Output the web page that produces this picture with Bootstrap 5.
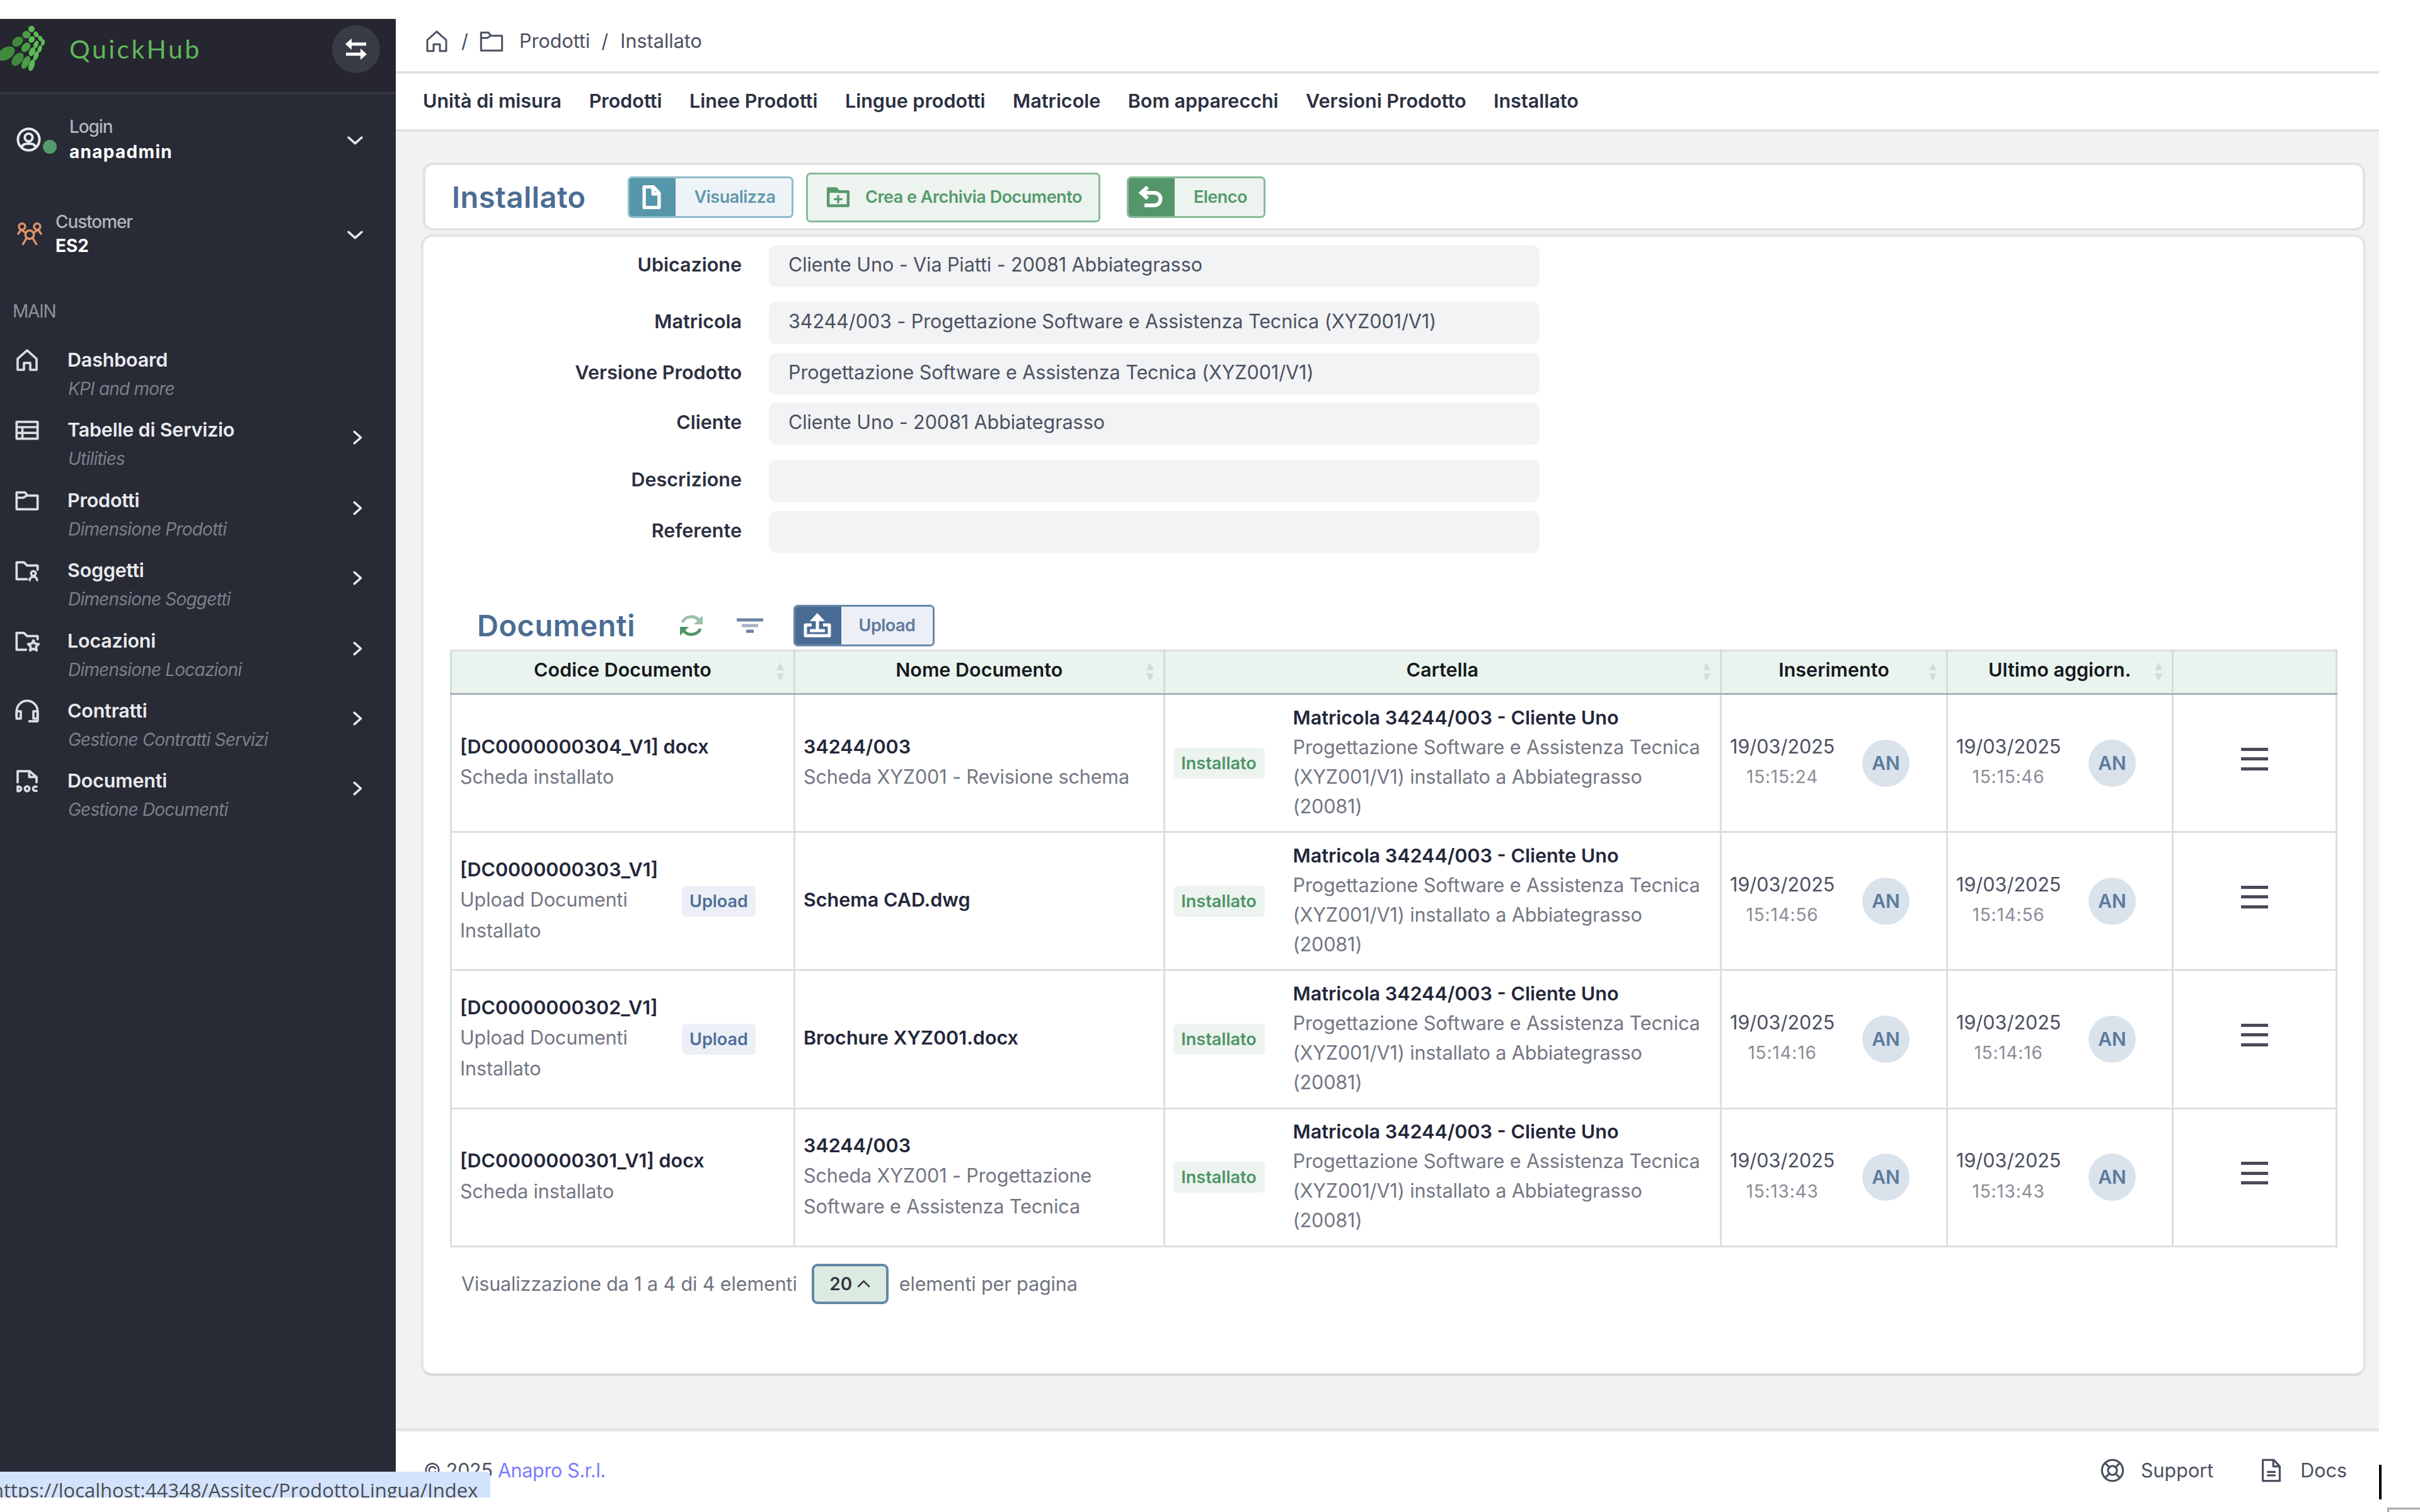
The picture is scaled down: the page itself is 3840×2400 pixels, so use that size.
<!DOCTYPE html>
<html lang="it">
<head>
  <meta charset="UTF-8" />
  <meta name="viewport" content="width=device-width, initial-scale=1.0"/>
  <title>QuickHub - Installato</title>
  <link href="https://cdn.jsdelivr.net/npm/bootstrap@5.3.2/dist/css/bootstrap.min.css" rel="stylesheet"/>
  <style>
    body {
      font-family: Inter, "Liberation Sans", sans-serif;
      font-size: 30.5px;
      line-height: 48.5px;
      color: #4b5160;
      background: #fff;
      height: 2400px;
      overflow: hidden;
    }
    svg { display: block; flex: none; fill: none; stroke: currentColor; stroke-width: 2; stroke-linecap: round; stroke-linejoin: round; }
    a { text-decoration: none; color: inherit; }

    /* sidebar */
    .sidebar { width: 628px; height: 2307px; margin-top: 30px; background: #282a35; color: #e9eaee; }
    .side-head { height: 120px; background: #252630; border-bottom: 4px solid #343641; padding: 0 25px 20px 0; }
    .brand-name { font-family: Lato, sans-serif; font-size: 41px; letter-spacing: 3.4px; color: #5fb85a; margin-left: 36px; }
    .toggle-btn { width: 76px; height: 76px; background: #393b46; color: #fff; }
    .user-box { height: 142px; padding: 0 52px 0 26px; font-size: 28px; line-height: 40px; }
    .cust-box { height: 158px; line-height: 38px; }
    .cust-name { margin-left: 20px; }
    .head-chev { margin-top: 5px; stroke-width: 3.4; }
    .muted-top { color: #b2b4bc; font-weight: 500; letter-spacing: -1.1px; }
    .online-dot { width: 22px; height: 22px; background: #559a6b; margin: 24px 20px 0 3px; }
    .user-name { letter-spacing: 1.3px; }
    .section-label { height: 89px; line-height: 89px; padding-left: 20px; font-size: 28px; color: #90929b; letter-spacing: -1.2px; }
    .side-item { height: 111.4px; padding: 8px 52px 0 23px; }
    .side-icon { margin: 5px 44px 0 0; color: #dcdde2; stroke-width: 2.2; }
    .side-chev { margin-top: 25px; stroke-width: 3; }
    .side-title { line-height: 47px; font-weight: 600; letter-spacing: -0.2px; color: #e9eaee; }
    .side-sub { line-height: 47px; font-size: 28px; font-style: italic; letter-spacing: -0.8px; color: #7d7f89; padding-left: 1px; }

    /* header */
    .main-col { width: 3147px; height: 2400px; }
    .crumbs { height: 117px; padding: 18px 0 0 45px; border-bottom: 4px solid #dfe1e6; }
    .top-nav { height: 92px; padding: 0 0 2px 43px; gap: 43.5px; border-bottom: 4px solid #e2e2e2; font-weight: 600; letter-spacing: 0; color: #2b3041; }
    .page-area { height: 2058px; background: #f2f2f2; padding: 49px 0 0 43px; }

    /* cards */
    .title-card { width: 3082px; height: 108px; border: 4px solid #dfe2e6; border-radius: 16px; background: #fff; padding: 2px 0 0 42px; }
    .main-card { width: 3086px; height: 1812px; margin: 6px 0 0 -3px; border: 4px solid #e4e4e5; border-bottom-color: #d9d9d9; border-radius: 18px; background: #fff; }
    .page-title { font-size: 47px; font-weight: 600; letter-spacing: 0.5px; color: #4b6d94; }

    .act-btn { height: 66px; border: 3px solid; border-radius: 7px; font-size: 27px; font-weight: 600; letter-spacing: -0.5px; overflow: hidden; }
    .act-btn .act-icon { width: 76px; height: 66px; margin-left: -3px; color: #fff; }
    .act-teal { border-color: #8ebccb; background: #edf3f6; color: #6197ac; }
    .act-teal .act-icon { background: #5596aa; }
    .act-green { border-color: #88bb99; background: #edf3ef; color: #569a6c; }
    .act-green .act-icon { background: #549669; }
    .act-blue { border-color: #6888ad; background: #eceff5; color: #5e7a9c; }
    .act-blue .act-icon { background: #496b94; }

    /* form */
    .field-label { width: 505px; font-weight: 600; color: #2b3040; margin-right: 43px; line-height: 46px; padding-bottom: 5px; }
    .field-box { width: 1223px; height: 67px; border-radius: 12px; background: #f2f3f5; padding: 7px 31px; letter-spacing: -0.07px; }

    /* table */
    .docs-table { width: 2994.5px; margin: 5px 0 0 42px; border-collapse: collapse; table-layout: fixed; }
    .docs-table th, .docs-table td { border: 3px solid #dcdee3; padding: 0 13px; vertical-align: middle; }
    .docs-table th { position: relative; height: 69px; background: #eaf4ee; color: #17191f; font-weight: 600; text-align: center; border-bottom-color: #a9b2ba; border-left-color: #d3dcd9; border-right-color: #d3dcd9; padding-bottom: 8px; }
    .docs-table td { height: 219.2px; }
    .sort-mark { position: absolute; right: 14px; top: 17px; color: #d8d9dc; fill: currentColor; stroke: none; }
    .strong-text { font-weight: 600; color: #23273a; }
    .soft-text { color: #737783; letter-spacing: -0.1px; }
    .cell-text { padding-bottom: 4px; }
    .folder-text { line-height: 47px; padding-bottom: 5px; margin-left: 45px; }
    .date-text { width: 166px; text-align: center; padding-bottom: 4px; }
    .time-text { font-size: 28px; letter-spacing: 0.8px; color: #8a8c96; }
    .tag { height: 49px; line-height: 49px; border-radius: 7px; font-size: 27px; font-weight: 600; text-align: center; }
    .tag-green { width: 145px; background: #edf3ef; color: #4f9567; }
    .tag-blue { width: 117px; background: #eceff5; color: #4f6f98; }
    .initials { width: 75px; height: 75px; margin-left: 44px; background: #dae2ec; color: #5b7a9c; font-size: 30px; font-weight: 600; }
    .burger { width: 43px; height: 36px; margin: 0 auto 13px; border-top: 5px solid #474b58; border-bottom: 5px solid #474b58; padding-top: 10.5px; }
    .burger div { height: 5px; background: #474b58; }

    .pager { margin: 26px 0 0 60px; color: #6f7480; letter-spacing: -0.12px; }
    .page-size { width: 122px; height: 64px; border: 4px solid #6488a8; border-radius: 9px; background: #dcebe1; color: #33373f; font-size: 28px; font-weight: 600; margin: 0 17px 0 23px; }

    /* footer */
    .foot { height: 133px; border-top: 5px solid #e3e6e9; padding: 0 51px 4px 44px; }
    .foot a.site { color: #7a7cff; letter-spacing: -0.35px; }
    .copy { letter-spacing: -0.3px; }
    .status-bar { position: absolute; left: 0; top: 2336px; width: 778px; height: 41px; background: #d3e3fd; overflow: hidden; border-top-right-radius: 8px; color: #4a4d52; }
    .status-bar div { margin: 8px 0 0 -13px; font-family: "Open Sans", sans-serif; font-size: 31px; line-height: 42px; white-space: nowrap; }
    .caret-line { position: absolute; left: 3775px; top: 2325px; width: 4px; height: 55px; background: #000; }
    .corner-box { position: absolute; left: 3788px; top: 2393px; width: 60px; height: 20px; border: 3px solid #a8a8a8; }
  </style>
</head>
<body>
  <!-- shared icons -->
  <svg width="0" height="0" class="position-absolute">
    <symbol id="i-home" viewBox="0 0 24 24"><path d="M3 21V10.500L12 2.500l9 8V21h-6v-6.500h-6V21z"/></symbol>
    <symbol id="i-folder" viewBox="0 0 24 24"><path d="M2 4h8l2.500 3H22v13H2zM2 9h6.500l3-2"/></symbol>
    <symbol id="i-right" viewBox="0 0 14 20"><path d="M2 2l9 8-9 8"/></symbol>
    <symbol id="i-down" viewBox="0 0 24 14"><path d="M2 2l10 9L22 2"/></symbol>
    <symbol id="i-sort" viewBox="0 0 14 31"><path d="M7 0l6 13H1zM7 31L1 18h12z"/></symbol>
  </svg>

  <div class="d-flex">
    <aside class="sidebar">
      <div class="side-head d-flex align-items-center">
        <svg width="74" height="78" viewBox="0 40 74 78" style="stroke:none">
          <g fill="#3f8a3c"><ellipse cx="10" cy="86" rx="15" ry="9.500" transform="rotate(-35 10 86)"/><ellipse cx="28" cy="67" rx="9.500" ry="7" transform="rotate(-35 28 67)"/><ellipse cx="28" cy="95" rx="12" ry="7.500" transform="rotate(-50 28 95)"/></g>
          <g fill="#4a9f46"><ellipse cx="42" cy="56" rx="6.500" ry="6"/><ellipse cx="41" cy="76" rx="8.500" ry="6" transform="rotate(-50 41 76)"/><ellipse cx="41" cy="100" rx="11" ry="5.500" transform="rotate(-62 41 100)"/></g>
          <g fill="#5bbb55"><ellipse cx="50" cy="47" rx="5" ry="5"/><ellipse cx="50.500" cy="64" rx="5.500" ry="4.500" transform="rotate(-50 50 64)"/><ellipse cx="51" cy="83" rx="7.500" ry="4.500" transform="rotate(-65 51 83)"/><ellipse cx="50.500" cy="105" rx="9.500" ry="4.500" transform="rotate(-72 50 105)"/><ellipse cx="57.500" cy="55" rx="4.800" ry="3.700" transform="rotate(60 57 55)"/><ellipse cx="57.500" cy="72" rx="6.200" ry="3.700" transform="rotate(-70 57 72)"/><ellipse cx="57.500" cy="90" rx="7.700" ry="3.700" transform="rotate(-72 57 90)"/><ellipse cx="64" cy="62" rx="4.700" ry="3.300" transform="rotate(60 64 62)"/><ellipse cx="63.500" cy="79" rx="6.200" ry="3.300" transform="rotate(-72 63 79)"/><ellipse cx="68.500" cy="69" rx="5" ry="2.900" transform="rotate(-80 68 69)"/></g>
        </svg>
        <span class="brand-name">QuickHub</span>
        <div class="toggle-btn rounded-circle ms-auto d-flex align-items-center justify-content-center">
          <svg width="34" height="36" viewBox="0 0 34 36"><g stroke="none" fill="currentColor"><path d="M0 10L10 1v18z"/><path d="M34 26L24 17v18z"/></g><path stroke-width="5" stroke-linecap="butt" d="M8 10h25M1 26h25"/></svg>
        </div>
      </div>

      <div class="user-box d-flex align-items-center">
        <svg width="39" height="39" viewBox="0 0 24 24" style="stroke-width:2.4"><circle cx="12" cy="12" r="10.500"/><circle cx="12" cy="10" r="3.800"/><path d="M5.500 19c1-4 12-4 13 0"/></svg>
        <div class="online-dot rounded-circle"></div>
        <div><div class="muted-top">Login</div><div class="user-name fw-bold text-white">anapadmin</div></div>
        <svg class="ms-auto head-chev" width="25" height="15"><use href="#i-down"/></svg>
      </div>
      <div class="user-box cust-box d-flex align-items-center">
        <svg width="42" height="36" viewBox="0 0 28 24" color="#dd9468" style="stroke-width:2.3"><circle cx="14" cy="13" r="4.500"/><path d="M7 23l3.500-6M21 23l-3.500-6M2 12l3-4.500L9.500 11M26 12l-3-4.500-4.500 3.500"/><circle cx="6" cy="4.500" r="3.300"/><circle cx="22" cy="4.500" r="3.300"/></svg>
        <div class="cust-name"><div class="muted-top">Customer</div><div class="fw-bold text-white">ES2</div></div>
        <svg class="ms-auto head-chev" width="25" height="15"><use href="#i-down"/></svg>
      </div>
      <div class="section-label">MAIN</div>

      <div class="side-item d-flex">
        <svg class="side-icon" width="40" height="40"><use href="#i-home"/></svg>
        <div><div class="side-title">Dashboard</div><div class="side-sub">KPI and more</div></div>
      </div>
      <div class="side-item d-flex">
        <svg class="side-icon" width="40" height="40" viewBox="0 0 24 24"><path d="M2 4h20v16H2zM2 9h20M2 14.500h20M7.500 9v11"/></svg>
        <div><div class="side-title">Tabelle di Servizio</div><div class="side-sub">Utilities</div></div>
        <svg class="ms-auto side-chev" width="16" height="23"><use href="#i-right"/></svg>
      </div>
      <div class="side-item d-flex">
        <svg class="side-icon" width="40" height="40"><use href="#i-folder"/></svg>
        <div><div class="side-title">Prodotti</div><div class="side-sub">Dimensione Prodotti</div></div>
        <svg class="ms-auto side-chev" width="16" height="23"><use href="#i-right"/></svg>
      </div>
      <div class="side-item d-flex">
        <svg class="side-icon" width="40" height="40" viewBox="0 0 24 24"><path d="M12 20H2V4h7l3 3h10v4"/><circle cx="18" cy="14.500" r="2.200"/><path d="M14.500 21c0-4.500 7-4.500 7 0"/></svg>
        <div><div class="side-title">Soggetti</div><div class="side-sub">Dimensione Soggetti</div></div>
        <svg class="ms-auto side-chev" width="16" height="23"><use href="#i-right"/></svg>
      </div>
      <div class="side-item d-flex">
        <svg class="side-icon" width="40" height="40" viewBox="0 0 24 24"><path d="M11 20H2V4h7l3 3h10v3"/><path d="M18 11l1.500 3.200 3.500.4-2.500 2.500.6 3.600L18 19l-3.100 1.700.6-3.600-2.500-2.500 3.500-.4z"/></svg>
        <div><div class="side-title">Locazioni</div><div class="side-sub">Dimensione Locazioni</div></div>
        <svg class="ms-auto side-chev" width="16" height="23"><use href="#i-right"/></svg>
      </div>
      <div class="side-item d-flex">
        <svg class="side-icon" width="40" height="40" viewBox="0 0 24 24"><path d="M2 17v-5a10 10 0 0 1 20 0v9.500h-8"/><path d="M2 12h4v7H2zM18 12h4v7h-4z"/></svg>
        <div><div class="side-title">Contratti</div><div class="side-sub">Gestione Contratti Servizi</div></div>
        <svg class="ms-auto side-chev" width="16" height="23"><use href="#i-right"/></svg>
      </div>
      <div class="side-item d-flex">
        <svg class="side-icon" width="40" height="40" viewBox="0 0 24 24"><path d="M3 13V2.500h11.500L21 8v5M14 2.500V8h7"/><path d="M3 17v4.500c4.500 0 4.500-4.500 0-4.500z"/><ellipse cx="12" cy="19.200" rx="2.200" ry="2.300"/><path d="M21 17.200c-4.500-1-4.500 5 0 4"/></svg>
        <div><div class="side-title">Documenti</div><div class="side-sub">Gestione Documenti</div></div>
        <svg class="ms-auto side-chev" width="16" height="23"><use href="#i-right"/></svg>
      </div>
    </aside>

    <main class="main-col">
      <div class="crumbs d-flex align-items-center">
        <svg width="40" height="42" style="stroke-width:1.8"><use href="#i-home"/></svg>
        <span style="margin:0 17px 0 19px">/</span>
        <svg width="40" height="42" viewBox="0 0 24 24" style="stroke-width:1.8"><path d="M2 3.500h7l2.500 3H22v14H2zM2 8.500h6l3-2"/></svg>
        <a href="#" style="margin-left:24px">Prodotti</a>
        <span style="margin:0 19px 0 18px">/</span>
        <span>Installato</span>
      </div>
      <nav class="top-nav d-flex align-items-center">
        <a href="#">Unità di misura</a>
        <a href="#">Prodotti</a>
        <a href="#">Linee Prodotti</a>
        <a href="#">Lingue prodotti</a>
        <a href="#">Matricole</a>
        <a href="#">Bom apparecchi</a>
        <a href="#">Versioni Prodotto</a>
        <a href="#">Installato</a>
      </nav>

      <div class="page-area">
        <div class="title-card d-flex align-items-center">
          <div class="page-title" style="width:279px">Installato</div>
          <button class="act-btn act-teal p-0 d-flex align-items-center" style="width:263px">
            <span class="act-icon d-flex align-items-center justify-content-center"><svg width="36" height="40" viewBox="0 0 24 27" style="stroke-width:3.6"><path d="M4 2.500h10l6 6.500v15.500H4zM13.500 3v7H20"/></svg></span>
            <span class="flex-fill ps-1">Visualizza</span>
          </button>
          <button class="act-btn act-green p-0 d-flex align-items-center" style="width:467px;height:79px;margin:0 42px 0 20px">
            <svg width="38" height="34" viewBox="0 0 24 21" style="margin:0 24px 0 29px"><path stroke-width="2.800" d="M2 2h8l2.500 3H22v14H2z"/><path fill="currentColor" d="M2 2h8l2.500 3H2zM12 9v7M8.500 12.500h7"/></svg>
            <span>Crea e Archivia Documento</span>
          </button>
          <button class="act-btn act-green p-0 d-flex align-items-center" style="width:220px">
            <span class="act-icon d-flex align-items-center justify-content-center"><svg width="40" height="38" viewBox="0 0 40 38"><path stroke-width="6" stroke-linecap="butt" stroke-linejoin="miter" d="M15 3L5 12l10 9M6 12h19c14 0 14 20 0 20H10"/></svg></span>
            <span class="flex-fill ps-1">Elenco</span>
          </button>
        </div>

        <div class="main-card">
          <div class="d-flex align-items-center" style="margin-top:13px"><div class="field-label text-end">Ubicazione</div><div class="field-box">Cliente Uno - Via Piatti - 20081 Abbiategrasso</div></div>
          <div class="d-flex align-items-center" style="margin-top:23px"><div class="field-label text-end">Matricola</div><div class="field-box">34244/003 - Progettazione Software e Assistenza Tecnica (XYZ001/V1)</div></div>
          <div class="d-flex align-items-center" style="margin-top:14px"><div class="field-label text-end">Versione Prodotto</div><div class="field-box">Progettazione Software e Assistenza Tecnica (XYZ001/V1)</div></div>
          <div class="d-flex align-items-center" style="margin-top:12px"><div class="field-label text-end">Cliente</div><div class="field-box">Cliente Uno - 20081 Abbiategrasso</div></div>
          <div class="d-flex align-items-center" style="margin-top:24px"><div class="field-label text-end">Descrizione</div><div class="field-box"></div></div>
          <div class="d-flex align-items-center" style="margin-top:14px"><div class="field-label text-end">Referente</div><div class="field-box"></div></div>

          <div class="d-flex align-items-center" style="margin:82px 0 0 85px">
            <div class="page-title" style="width:319px">Documenti</div>
            <svg width="42" height="38" viewBox="0 0 42 38"><g stroke-width="5" stroke-linecap="butt"><path stroke="#9cc3a8" d="M7 14C10 4 27 1 34 12"/><path stroke="#4f9567" d="M35 24C32 34 15 37 8 26"/></g><path fill="#9cc3a8" stroke="none" d="M39 3v14H25z"/><path fill="#4f9567" stroke="none" d="M3 35V21h14z"/></svg>
            <svg width="42" height="24" viewBox="0 0 42 24" style="margin:0 48px 0 51px"><g stroke-width="5" stroke-linecap="butt"><path stroke="#6d82a6" d="M0 3h42"/><path stroke="#a9b0c2" d="M8 12h26"/><path stroke="#6d82a6" d="M15 21h12"/></g></svg>
            <button class="act-btn act-blue p-0 d-flex align-items-center" style="width:224px">
              <span class="act-icon d-flex align-items-center justify-content-center"><svg width="44" height="40" viewBox="0 0 44 40"><g stroke-width="5" stroke-linecap="butt"><path d="M13 19H3v17h38V19H31M22 29V10"/><path d="M10 28h24"/></g><path fill="currentColor" stroke="none" d="M22 0l12 13H10z"/></svg></span>
              <span class="flex-fill">Upload</span>
            </button>
          </div>

          <table class="docs-table">
            <colgroup><col style="width:545px"><col style="width:586.5px"><col style="width:883.5px"><col style="width:359px"><col style="width:357.5px"><col style="width:260px"></colgroup>
            <thead>
              <tr>
                <th>Codice Documento<svg class="sort-mark" width="14" height="31"><use href="#i-sort"/></svg></th>
                <th>Nome Documento<svg class="sort-mark" width="14" height="31"><use href="#i-sort"/></svg></th>
                <th>Cartella<svg class="sort-mark" width="14" height="31"><use href="#i-sort"/></svg></th>
                <th>Inserimento<svg class="sort-mark" width="14" height="31"><use href="#i-sort"/></svg></th>
                <th>Ultimo aggiorn.<svg class="sort-mark" width="14" height="31"><use href="#i-sort"/></svg></th>
                <th></th>
              </tr>
            </thead>
            <tbody>
              <tr>
                <td><div class="cell-text"><div class="strong-text">[DC0000000304_V1] docx</div><div class="soft-text">Scheda installato</div></div></td>
                <td><div class="cell-text"><div class="strong-text">34244/003</div><div class="soft-text">Scheda XYZ001 - Revisione schema</div></div></td>
                <td><div class="d-flex align-items-center"><span class="tag tag-green">Installato</span><div class="folder-text"><div class="strong-text">Matricola 34244/003 - Cliente Uno</div><div class="soft-text">Progettazione Software e Assistenza Tecnica<br>(XYZ001/V1) installato a Abbiategrasso<br>(20081)</div></div></div></td>
                <td><div class="d-flex align-items-center"><div class="date-text"><div>19/03/2025</div><div class="time-text">15:15:24</div></div><div class="initials rounded-circle d-flex align-items-center justify-content-center">AN</div></div></td>
                <td><div class="d-flex align-items-center"><div class="date-text"><div>19/03/2025</div><div class="time-text">15:15:46</div></div><div class="initials rounded-circle d-flex align-items-center justify-content-center">AN</div></div></td>
                <td><div class="burger"><div></div></div></td>
              </tr>
              <tr>
                <td><div class="d-flex align-items-center"><div class="cell-text" style="width:352px"><div class="strong-text">[DC0000000303_V1]</div><div class="soft-text">Upload Documenti<br>Installato</div></div><span class="tag tag-blue">Upload</span></div></td>
                <td><div class="cell-text strong-text">Schema CAD.dwg</div></td>
                <td><div class="d-flex align-items-center"><span class="tag tag-green">Installato</span><div class="folder-text"><div class="strong-text">Matricola 34244/003 - Cliente Uno</div><div class="soft-text">Progettazione Software e Assistenza Tecnica<br>(XYZ001/V1) installato a Abbiategrasso<br>(20081)</div></div></div></td>
                <td><div class="d-flex align-items-center"><div class="date-text"><div>19/03/2025</div><div class="time-text">15:14:56</div></div><div class="initials rounded-circle d-flex align-items-center justify-content-center">AN</div></div></td>
                <td><div class="d-flex align-items-center"><div class="date-text"><div>19/03/2025</div><div class="time-text">15:14:56</div></div><div class="initials rounded-circle d-flex align-items-center justify-content-center">AN</div></div></td>
                <td><div class="burger"><div></div></div></td>
              </tr>
              <tr>
                <td><div class="d-flex align-items-center"><div class="cell-text" style="width:352px"><div class="strong-text">[DC0000000302_V1]</div><div class="soft-text">Upload Documenti<br>Installato</div></div><span class="tag tag-blue">Upload</span></div></td>
                <td><div class="cell-text strong-text">Brochure XYZ001.docx</div></td>
                <td><div class="d-flex align-items-center"><span class="tag tag-green">Installato</span><div class="folder-text"><div class="strong-text">Matricola 34244/003 - Cliente Uno</div><div class="soft-text">Progettazione Software e Assistenza Tecnica<br>(XYZ001/V1) installato a Abbiategrasso<br>(20081)</div></div></div></td>
                <td><div class="d-flex align-items-center"><div class="date-text"><div>19/03/2025</div><div class="time-text">15:14:16</div></div><div class="initials rounded-circle d-flex align-items-center justify-content-center">AN</div></div></td>
                <td><div class="d-flex align-items-center"><div class="date-text"><div>19/03/2025</div><div class="time-text">15:14:16</div></div><div class="initials rounded-circle d-flex align-items-center justify-content-center">AN</div></div></td>
                <td><div class="burger"><div></div></div></td>
              </tr>
              <tr>
                <td><div class="cell-text"><div class="strong-text">[DC0000000301_V1] docx</div><div class="soft-text">Scheda installato</div></div></td>
                <td><div class="cell-text"><div class="strong-text">34244/003</div><div class="soft-text">Scheda XYZ001 - Progettazione<br>Software e Assistenza Tecnica</div></div></td>
                <td><div class="d-flex align-items-center"><span class="tag tag-green">Installato</span><div class="folder-text"><div class="strong-text">Matricola 34244/003 - Cliente Uno</div><div class="soft-text">Progettazione Software e Assistenza Tecnica<br>(XYZ001/V1) installato a Abbiategrasso<br>(20081)</div></div></div></td>
                <td><div class="d-flex align-items-center"><div class="date-text"><div>19/03/2025</div><div class="time-text">15:13:43</div></div><div class="initials rounded-circle d-flex align-items-center justify-content-center">AN</div></div></td>
                <td><div class="d-flex align-items-center"><div class="date-text"><div>19/03/2025</div><div class="time-text">15:13:43</div></div><div class="initials rounded-circle d-flex align-items-center justify-content-center">AN</div></div></td>
                <td><div class="burger"><div></div></div></td>
              </tr>
            </tbody>
          </table>

          <div class="pager d-flex align-items-center">
            <span>Visualizzazione da 1 a 4 di 4 elementi</span>
            <button class="page-size p-0 d-flex align-items-center justify-content-center">20<svg class="ms-2" width="21" height="13" viewBox="0 0 21 13" style="stroke-width:2.5"><path d="M2 11l8.500-8.500L19 11"/></svg></button>
            <span>elementi per pagina</span>
          </div>
        </div>
      </div>

      <footer class="foot d-flex align-items-center">
        <span class="copy">© 2025 <a href="#" class="site">Anapro S.r.l.</a></span>
        <svg class="ms-auto" width="38" height="38" viewBox="0 0 24 24"><circle cx="12" cy="12" r="10.500"/><circle cx="12" cy="12" r="4.500"/><path d="M5 5l4 4M19 5l-4 4M5 19l4-4M19 19l-4-4"/></svg>
        <span style="margin:0 75px 0 26px">Support</span>
        <svg width="34" height="38" viewBox="0 0 21 24"><path d="M2 1.500h11L19 8v14.500H2zM12.500 2v6H19"/><path d="M7 13.500h7M7 17h7"/></svg>
        <span style="margin-left:29px">Docs</span>
      </footer>
    </main>
  </div>

  <!-- browser link preview -->
  <div class="status-bar"><div>https://localhost:44348/Assitec/ProdottoLingua/Index</div></div>
  <div class="caret-line"></div>
  <div class="corner-box"></div>

  <script src="https://cdn.jsdelivr.net/npm/bootstrap@5.3.2/dist/js/bootstrap.bundle.min.js"></script>
</body>
</html>
